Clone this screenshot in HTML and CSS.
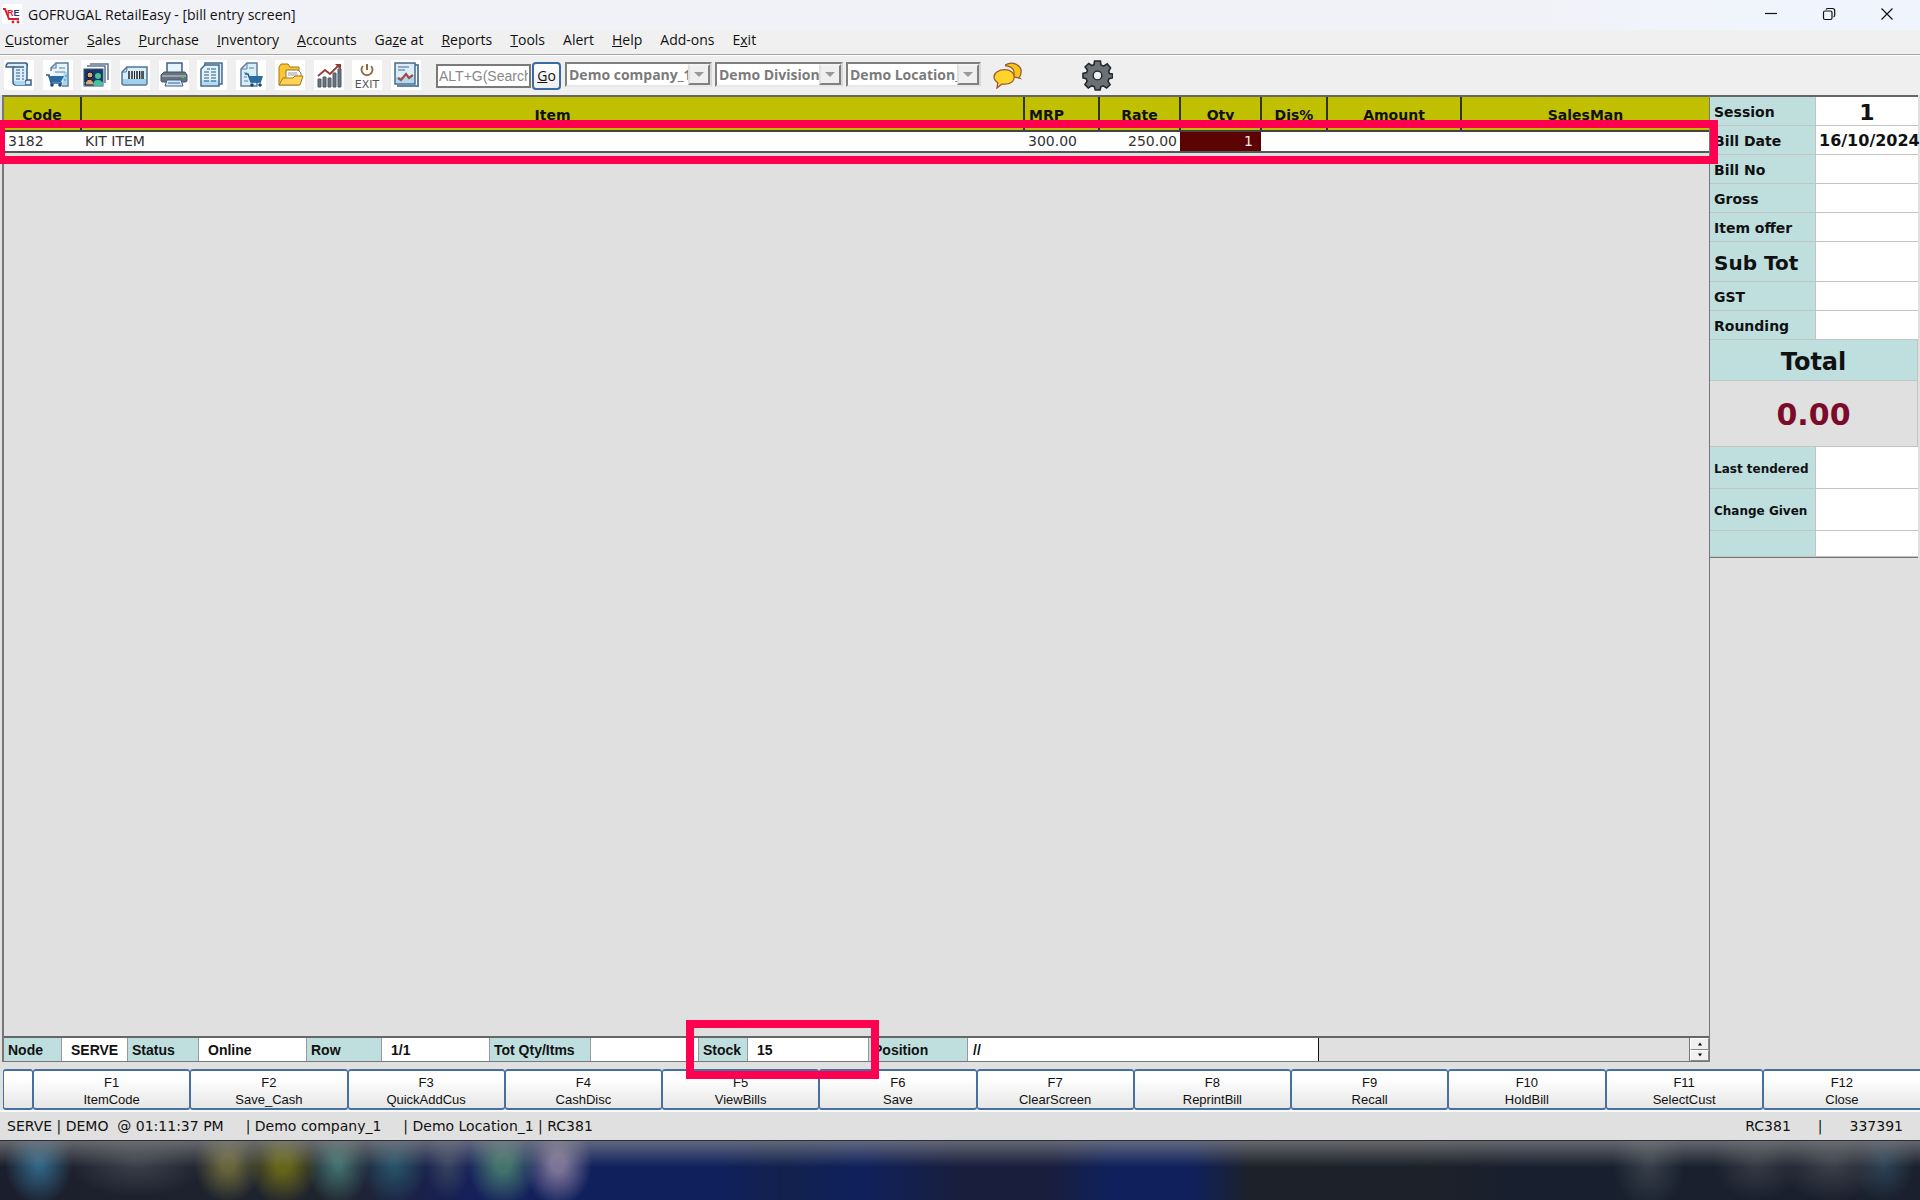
FILE: index.html
```html
<!DOCTYPE html>
<html lang="en">
<head>
    <meta charset="UTF-8">
    <meta name="viewport" content="width=device-width, initial-scale=1.0">
    <title>GOFRUGAL RetailEasy - [bill entry screen]</title>
    <link rel="stylesheet" href="styles.css">
</head>
<body>
    <header class="titlebar">
        <svg class="app-icon" viewBox="0 0 20 20" aria-hidden="true">
            <rect width="20" height="20" fill="#fff"/>
            <path d="M1 5h2l4 10h10" fill="none" stroke="#d8202c" stroke-width="2"/>
            <text x="5" y="12" class="app-icon-text"><tspan fill="#d8202c">R</tspan><tspan fill="#25367c">E</tspan></text>
            <circle cx="11" cy="18" r="1.4" fill="#d8202c"/>
            <circle cx="16" cy="18" r="1.4" fill="#d8202c"/>
        </svg>
        <h1>GOFRUGAL RetailEasy - [bill entry screen]</h1>
        <div class="window-buttons">
            <button type="button" aria-label="Minimize"><svg viewBox="0 0 14 14"><path d="M1 6.500h12"/></svg></button>
            <button type="button" aria-label="Restore"><svg viewBox="0 0 14 14"><rect x="1.500" y="4" width="8.500" height="8.500" rx="1.500"/><path d="M4 2.500Q4.500 1.500 6 1.500h4.500q2.200 0 2.200 2.200V8q0 1.500-1.200 2"/></svg></button>
            <button type="button" aria-label="Close"><svg viewBox="0 0 14 14"><path d="M1.500 1.500l11 11M12.500 1.500l-11 11"/></svg></button>
        </div>
    </header>

    <nav class="menubar">
        <button type="button"><u>C</u>ustomer</button>
        <button type="button"><u>S</u>ales</button>
        <button type="button"><u>P</u>urchase</button>
        <button type="button"><u>I</u>nventory</button>
        <button type="button"><u>A</u>ccounts</button>
        <button type="button">Ga<u>z</u>e at</button>
        <button type="button"><u>R</u>eports</button>
        <button type="button"><u>T</u>ools</button>
        <button type="button">Alert</button>
        <button type="button"><u>H</u>elp</button>
        <button type="button">Add-ons</button>
        <button type="button">E<u>x</u>it</button>
    </nav>

    <div class="toolbar">
        <div class="tools">
            <button type="button" aria-label="Bill"><svg viewBox="0 0 30 30">
                <path d="M4 3h18q2 1 1 4v13h4v5H12q-3 0-3-3V7H2q0-3 2-4z" fill="#d9eefa" stroke="#3d5f86" stroke-width="1.500"/>
                <path d="M9 7h11M23 20q-2 0-2 5" fill="none" stroke="#3d5f86" stroke-width="1.300"/>
                <path d="M10 21h11v4h-9q-2-1-2-4z" fill="#a9d8f0"/>
                <path d="M12 10h4M12 13h4M12 16h4M12 19h4M18 10h2M18 13h2M18 16h2M18 19h2" stroke="#33587e" stroke-width="1.200"/>
            </svg></button>
            <button type="button" aria-label="Sales"><svg viewBox="0 0 30 30">
                <path d="M8 11V8l5-5h12v23h-6" fill="#e6f4fc" stroke="#5f7ea0" stroke-width="1.500"/>
                <path d="M21 12h3v13h-5z" fill="#a9d8f0"/>
                <path d="M13 3v5H8M16 8h6M12 12h10M22 16h2M21 20h2" fill="none" stroke="#5f7ea0" stroke-width="1.200"/>
                <path d="M3 15h3l2 8h11" fill="none" stroke="#205b8e" stroke-width="1.500"/>
                <path d="M5 16h16l-3 6H8z" fill="#2a6ba3"/>
                <circle cx="9" cy="25" r="1.800" fill="#174a76"/><circle cx="17" cy="25" r="1.800" fill="#174a76"/>
            </svg></button>
            <button type="button" aria-label="Customers"><svg viewBox="0 0 30 30">
                <path d="M9 4h18v16M6 6h18v17" fill="none" stroke="#5b7594" stroke-width="1.500"/>
                <rect x="3" y="9" width="19" height="17" fill="#16386c" stroke="#345777"/>
                <path d="M3 22h19v4H3z" fill="#5aa0d0"/>
                <circle cx="9" cy="15" r="3" fill="#d9a781" stroke="#111"/><path d="M4 25q0-5 5-6 4 1 4 6z" fill="#d9a781" stroke="#111"/>
                <circle cx="17" cy="16" r="3" fill="#44c490"/><path d="M12 25q0-5 5-5t4 5z" fill="#44c490"/>
            </svg></button>
            <button type="button" aria-label="Barcode"><svg viewBox="0 0 30 30">
                <path d="M7 7h20v16q0 2-2 2H4q-2 0-2-2V12z" fill="#d7edf9" stroke="#4f7498" stroke-width="1.500"/>
                <path d="M2 12h4q1-1 1-5" fill="none" stroke="#4f7498"/>
                <path d="M3 19h23v5H3z" fill="#9fd0ec"/>
                <path d="M9 11v8M12 11v8M17 11v8M23 11v8" stroke="#222" stroke-width="1.500"/><path d="M14.500 11v8M19.500 11v8M21.200 11v8" stroke="#222"/>
            </svg></button>
            <button type="button" aria-label="Print"><svg viewBox="0 0 30 30">
                <path d="M8 3h15v11H8z" fill="#e6f4fd" stroke="#3d5f86" stroke-width="1.500"/>
                <path d="M5 12h21l2 3v6q0 1-2 1H4q-2 0-2-1v-6z" fill="#68717c" stroke="#46525f"/><path d="M3 15h24v2H3z" fill="#9aa3ac"/>
                <circle cx="24" cy="17" r="1.300" fill="#35d070"/>
                <path d="M8 20h14l2 6H6z" fill="#d2eafa" stroke="#3d5f86"/><path d="M9 23h12" stroke="#3d5f86"/>
            </svg></button>
            <button type="button" aria-label="Reports"><svg viewBox="0 0 30 30">
                <path d="M8 3h17v21H8z" fill="#d9eefa" stroke="#44698c" stroke-width="1.500"/>
                <path d="M8 5h14v21H4V9z" fill="#e2f3fd" stroke="#44698c" stroke-width="1.500"/>
                <path d="M5 20h16v5H5z" fill="#b5dcf2"/>
                <path d="M10 9h3M7 12h5M7 15h5M7 18h5M7 21h5M14 9h5M14 12h5M14 15h5M14 18h5M14 21h5" stroke="#285b84"/>
            </svg></button>
            <button type="button" aria-label="Purchase order"><svg viewBox="0 0 30 30">
                <path d="M5 9l6-6h10v23H5z" fill="#d9eefa" stroke="#5f7ea0" stroke-width="1.500"/>
                <path d="M5 9h6V3M13 8h5M8 13h3M8 17h3M8 21h4" fill="none" stroke="#5f7ea0"/>
                <path d="M9 14h3l3 8h10" fill="none" stroke="#205b8e" stroke-width="1.500"/>
                <path d="M12 16h15l-2 6H15z" fill="#2a6ba3"/>
                <circle cx="16" cy="25" r="1.800" fill="#174a76"/><circle cx="24" cy="25" r="1.800" fill="#174a76"/>
            </svg></button>
            <button type="button" aria-label="Open"><svg viewBox="0 0 30 30">
                <path d="M4 25V7l2-3h7l2 3h9v18z" fill="#fcc62f" stroke="#a9741c"/>
                <path d="M11 10h12l3 3v6H11z" fill="#fff" stroke="#82754f"/><path d="M13 13h9M13 15h10" stroke="#999"/>
                <path d="M4 25l4-7h10l2-2h8l-3 9z" fill="#ffd557" stroke="#a9741c"/>
            </svg></button>
            <button type="button" aria-label="Analysis"><svg viewBox="0 0 30 30">
                <path d="M4 27v-8h3v8zM9 27V17h3v10zM14 27V18h3v9zM19 27V13h3v14zM24 27V9h3v18z" fill="#68747e" stroke="#4c5963"/>
                <path d="M4 16l7-6 5 4 9-9" fill="none" stroke="#8d4134" stroke-width="1.800"/><path d="M21 4h6v6z" fill="#8d4134"/>
            </svg></button>
            <button type="button" aria-label="Exit"><svg viewBox="0 0 30 30">
                <path d="M11 6a5.500 5.500 0 1 0 8 0" fill="none" stroke="#96663a" stroke-width="1.800"/><path d="M15 4v6" stroke="#96663a" stroke-width="2"/>
                <text x="15" y="28" class="exit-text">EXIT</text>
            </svg></button>
            <button type="button" aria-label="Dashboard"><svg viewBox="0 0 30 30">
                <path d="M6 26h21V5h-3" fill="none" stroke="#5f86a8" stroke-width="2"/>
                <rect x="4" y="3" width="20" height="21" fill="#d9eefa" stroke="#44698c" stroke-width="1.500"/>
                <path d="M5 17h18v6H5z" fill="#b0d8ef"/><path d="M7 7h11M7 10h7" stroke="#44698c"/>
                <path d="M7 18l3 2 5-6 3 4 4-3" fill="none" stroke="#a24c43" stroke-width="2.200"/>
            </svg></button>
        </div>
        <div class="finder">
            <input type="text" class="search" aria-label="Search menu" placeholder="ALT+G(Search)">
            <button type="button" class="go"><u>G</u>o</button>
        </div>
        <div class="combos">
            <div class="combo company"><select aria-label="Company" disabled><option>Demo company_1</option></select><span class="arrow"></span></div>
            <div class="combo division"><select aria-label="Division" disabled><option>Demo Division_1</option></select><span class="arrow"></span></div>
            <div class="combo location"><select aria-label="Location" disabled><option>Demo Location_1</option></select><span class="arrow"></span></div>
        </div>
        <button type="button" class="plain chat" aria-label="Messages"><svg viewBox="0 0 32 28">
            <path d="M13 3q5-3 10-1 7 3 6 9 0 3-2 5l1 1-8-2q3-3 1-7-3-4-8-4z" fill="#f8c516" stroke="#9a5935" stroke-width="1.300"/>
            <path d="M12 8c6 0 10 3 10 7.500S18 23 12 23l-3 0-5 4 1-5.500Q1 19 1 15.500C1 11 6 8 12 8z" fill="#ffd429" stroke="#9a5935" stroke-width="1.300"/>
        </svg></button>
        <button type="button" class="plain" aria-label="Settings"><svg viewBox="0 0 32 32">
            <path d="M13 1h6l.6 4.200 2.800 1.200L26 4l3.500 4-2 3.700.9 2.300 3.100.5v4l-3.600.8-1.100 2.600L29 25.500 25.500 29l-3.600-2.300-2.500 1L18.700 31h-5l-.9-3.400-2.700-1.100L6.500 29 3 25.400l2.300-3.600-1-2.500L1 18.500v-4.700l3.700-.8 1-2.400L3.200 7 7 3.500l3.300 2.200 2-.8z" fill="#6b7075" stroke="#22272c" stroke-width="1.600"/>
            <circle cx="16" cy="16" r="4.500" fill="#efefef" stroke="#22272c" stroke-width="1.500"/>
        </svg></button>
    </div>

    <main class="workspace">
        <section class="bill">
            <div class="items">
                <table>
                    <thead>
                        <tr>
                            <th class="code">Code</th>
                            <th>Item</th>
                            <th class="mrp">MRP</th>
                            <th class="rate">Rate</th>
                            <th class="qty">Qty</th>
                            <th class="dis">Dis%</th>
                            <th class="amount">Amount</th>
                            <th class="salesman">SalesMan</th>
                        </tr>
                    </thead>
                    <tbody>
                        <tr>
                            <td>3182</td>
                            <td>KIT ITEM</td>
                            <td>300.00</td>
                            <td class="num">250.00</td>
                            <td class="num active">1</td>
                            <td></td>
                            <td></td>
                            <td></td>
                        </tr>
                    </tbody>
                </table>
                <div class="mark mark-row"></div>
            </div>
            <div class="info">
                <span class="label node">Node</span><span class="value serve">SERVE</span>
                <span class="label status">Status</span><span class="value wide">Online</span>
                <span class="label row">Row</span><span class="value wide">1/1</span>
                <span class="label tot">Tot Qty/Itms</span><span class="value wide"></span>
                <div class="stock">
                    <span class="label">Stock</span><span class="value">15</span>
                    <div class="mark mark-stock"></div>
                </div>
                <span class="label position">Position</span><span class="value path">//</span>
                <span class="filler"></span>
                <div class="spinner">
                    <button type="button" aria-label="Up"><svg viewBox="0 0 6 4"><path d="M1 3.500L3 .5l2 3z"/></svg></button>
                    <button type="button" aria-label="Down"><svg viewBox="0 0 6 4"><path d="M1 .5l2 3 2-3z"/></svg></button>
                </div>
            </div>
        </section>

        <aside class="summary">
            <table>
                <tbody>
                    <tr><th>Session</th><td class="session">1</td></tr>
                    <tr><th>Bill Date</th><td>16/10/2024</td></tr>
                    <tr><th>Bill No</th><td></td></tr>
                    <tr><th>Gross</th><td></td></tr>
                    <tr><th>Item offer</th><td></td></tr>
                    <tr class="subtotal"><th>Sub Tot</th><td></td></tr>
                    <tr><th>GST</th><td></td></tr>
                    <tr><th>Rounding</th><td></td></tr>
                    <tr class="total"><th colspan="2">Total</th></tr>
                    <tr class="total-value"><td colspan="2">0.00</td></tr>
                    <tr class="tender"><th>Last tendered</th><td></td></tr>
                    <tr class="tender"><th>Change Given</th><td></td></tr>
                    <tr class="last"><th></th><td></td></tr>
                </tbody>
            </table>
        </aside>
    </main>

    <div class="fkeys">
        <button type="button" aria-label="More"></button>
        <button type="button">F1<br>ItemCode</button>
        <button type="button">F2<br>Save_Cash</button>
        <button type="button">F3<br>QuickAddCus</button>
        <button type="button">F4<br>CashDisc</button>
        <button type="button">F5<br>ViewBills</button>
        <button type="button">F6<br>Save</button>
        <button type="button">F7<br>ClearScreen</button>
        <button type="button">F8<br>ReprintBill</button>
        <button type="button">F9<br>Recall</button>
        <button type="button">F10<br>HoldBill</button>
        <button type="button">F11<br>SelectCust</button>
        <button type="button">F12<br>Close</button>
    </div>

    <footer class="statusbar">
        <span>SERVE | DEMO&nbsp; @ 01:11:37 PM</span>
        <span>| Demo company_1</span>
        <span>| Demo Location_1 | RC381</span>
        <span class="serial">RC381</span>
        <span>|</span>
        <span>337391</span>
    </footer>

    <div class="taskbar"></div>
</body>
</html>
```
FILE: styles.css
```css
* {
    box-sizing: border-box;
}
body {
    margin: 0;
    min-height: 100vh;
    display: flex;
    flex-direction: column;
    background: #e0e0e0;
    color: #111;
    font-family: "DejaVu Sans", Verdana, sans-serif;
    font-size: 14px;
    overflow: hidden;
}
button {
    margin: 0;
    padding: 0;
    border: none;
    background: none;
    color: inherit;
    font: inherit;
}
svg {
    display: block;
}

/* title bar and menu */
.titlebar {
    display: flex;
    align-items: center;
    height: 30px;
    padding: 0 4px 2px 2px;
    background: linear-gradient(90deg, #f1f2f8 80%, #f0f5fd 95%);
    font-family: "Open Sans", "Segoe UI", sans-serif;
}
.titlebar h1 {
    margin: 0 0 0 6px;
    font-size: 14px;
    font-weight: 400;
}
.app-icon {
    width: 20px;
    height: 20px;
}
.app-icon-text {
    font: bold 9px "Liberation Sans", sans-serif;
}
.window-buttons {
    display: flex;
    margin-left: auto;
}
.window-buttons button {
    width: 58px;
    height: 28px;
    display: flex;
    align-items: center;
    justify-content: center;
}
.window-buttons svg {
    width: 14px;
    height: 14px;
    fill: none;
    stroke: #111;
    stroke-width: 1.2;
}
.menubar {
    display: flex;
    gap: 18px;
    height: 25px;
    padding: 0 5px;
    background: #f0f0f0;
    border-bottom: 1px solid #a5a5a5;
    font-family: "Open Sans", "Segoe UI", sans-serif;
    font-size: 14px;
}
.menubar button {
    height: 20px;
    line-height: 20px;
}

/* toolbar */
.toolbar {
    display: flex;
    height: 40px;
    padding: 4px 4px;
    background: #efefef;
    border-top: 1px solid #fff;
}
.tools {
    display: flex;
    justify-content: space-between;
    width: 417px;
}
.tools button {
    height: 30px;
    background: #fff;
}
.tools svg {
    width: 30px;
    height: 30px;
}
.exit-text {
    font: 11px "DejaVu Sans", sans-serif;
    text-anchor: middle;
    fill: #555;
}
.finder {
    display: flex;
    align-items: center;
    margin-left: 15px;
    gap: 1px;
}
.search {
    width: 95px;
    height: 24px;
    padding: 0 1px;
    border: 2px solid #7a7a7a;
    background: #fff;
    font: 14px "Liberation Sans", Arial, sans-serif;
}
.search::placeholder {
    color: #888;
}
.go {
    width: 29px;
    height: 28px;
    border: 2px solid #3b6ba0;
    border-radius: 4px;
    background: linear-gradient(#fff, #eee);
    font: 14px "Open Sans", "Segoe UI", sans-serif;
}
.combos {
    display: flex;
    gap: 3px;
    margin-left: 4px;
}
.combo {
    display: flex;
    height: 25px;
    margin-top: 2px;
    background: #fff;
    border: 2px solid;
    border-color: #808080 #d8d8d8 #e8e8e8 #808080;
}
.combo select {
    flex: 1;
    min-width: 0;
    padding: 0 0 0 2px;
    border: none;
    appearance: none;
    background: #fff;
    color: #7b7b7b;
    opacity: 1;
    font: bold 14px "Open Sans", Tahoma, sans-serif;
}
.company {
    width: 147px;
}
.division {
    width: 128px;
}
.location {
    width: 135px;
}
.arrow {
    display: flex;
    align-items: center;
    justify-content: center;
    width: 22px;
    background: #efefef;
    border: 2px solid;
    border-color: #f4f4f4 #808080 #808080 #e0e0e0;
}
.arrow::before {
    content: "";
    border: 5px solid transparent;
    border-top-color: #999;
    border-bottom: none;
}
.plain svg {
    width: 31px;
    height: 31px;
}
.chat {
    margin: 0 58px 0 12px;
}
.chat svg {
    height: 27px;
}

/* bill entry grid */
.workspace {
    flex: 1;
    display: flex;
    padding: 0 2px 7px;
}
.bill {
    flex: 1;
    display: flex;
    flex-direction: column;
    border-top: 2px solid #666;
    border-left: 2px solid #777;
    border-right: 1px solid #777;
}
.items {
    position: relative;
    flex: 1;
}
.items table {
    width: 100%;
    table-layout: fixed;
    border-collapse: collapse;
}
.items th {
    height: 34px;
    padding: 3px 3px 0;
    background: #c0c000;
    border-right: 2px solid #33330a;
    border-bottom: 2px solid #444;
    font-size: 14px;
}
.items th:last-child {
    border-right: none;
}
.items td {
    height: 21px;
    padding: 0 4px 1px;
    background: #fff;
    border-bottom: 2px solid #555;
    color: #333;
}
.items .code {
    width: 77px;
}
.items .mrp {
    width: 75px;
    text-align: left;
    padding-left: 4px;
}
.items .rate,
.items .qty {
    width: 81px;
}
.items .dis {
    width: 66px;
}
.items .amount {
    width: 134px;
}
.items .salesman {
    width: 248px;
}
.items .num {
    text-align: right;
    padding-right: 3px;
}
.items .active {
    padding-right: 8px;
    background: #5c0404;
    color: #eee;
}

/* highlight frames */
.mark {
    position: absolute;
    border: 8px solid #ff0050;
    pointer-events: none;
}
.mark-row {
    top: 23px;
    left: -7px;
    right: -9px;
    height: 44px;
}
.mark-stock {
    top: -18px;
    right: -10px;
    bottom: -18px;
    left: -13px;
}

/* info strip */
.info {
    display: flex;
    height: 26px;
    border-top: 2px solid #666;
    border-bottom: 1px solid #777;
    font-family: "Liberation Sans", Arial, sans-serif;
    font-size: 14px;
    font-weight: 700;
    line-height: 25px;
}
.label,
.value {
    height: 23px;
    padding-left: 4px;
    border-right: 1px solid #999;
    white-space: nowrap;
}
.label {
    background: #bfdfdf;
}
.value {
    padding-left: 9px;
    background: #fff;
}
.node {
    width: 58px;
}
.serve {
    width: 66px;
}
.status {
    width: 71px;
}
.row {
    width: 75px;
}
.tot {
    width: 101px;
}
.wide {
    width: 108px;
}
.stock {
    position: relative;
    display: flex;
    width: 170px;
}
.stock .label {
    width: 49px;
}
.stock .value {
    flex: 1;
}
.position {
    width: 99px;
}
.path {
    width: 351px;
    padding-left: 5px;
    border-right: 1px solid #111;
}
.filler {
    flex: 1;
    border-right: 1px solid #777;
}
.spinner {
    display: flex;
    flex-direction: column;
    width: 19px;
}
.spinner button {
    flex: 1;
    display: flex;
    align-items: center;
    justify-content: center;
    background: #f0f0f0;
    border: 1px solid;
    border-color: #fff #888 #888 #fff;
}
.spinner svg {
    width: 6px;
    height: 4px;
}

/* totals panel */
.summary {
    width: 208px;
    border-top: 2px solid #666;
}
.summary table {
    width: 100%;
    table-layout: fixed;
    border-collapse: separate;
    border-spacing: 0;
    border-bottom: 1px solid #777;
    font-weight: 700;
}
.summary th,
.summary td {
    height: 29px;
    padding: 2px 0 0 4px;
    border-right: 1px solid #c4c4c4;
    border-bottom: 1px solid #c4c4c4;
    text-align: left;
    white-space: nowrap;
}
.summary th {
    width: 106px;
    background: #bfdfdf;
}
.summary td {
    padding-left: 3px;
    background: #fff;
    border-right: none;
    font-size: 16px;
    line-height: 18px;
}
.summary .session {
    padding: 4px 0 0;
    font-size: 22px;
    line-height: 22px;
    text-align: center;
}
.summary .subtotal th {
    height: 40px;
    font-size: 20px;
}
.summary .total th {
    height: 41px;
    padding: 3px 0 0;
    font-size: 24px;
    text-align: center;
}
.summary .total-value td {
    height: 66px;
    padding: 3px 0 0;
    background: #e0e0e0;
    border-right: 1px solid #c4c4c4;
    color: #7a0c2a;
    font-size: 30px;
    text-align: center;
}
.summary .tender th {
    height: 42px;
    font-size: 12px;
}
.summary .last th,
.summary .last td {
    height: 26px;
}

/* function keys */
.fkeys {
    display: grid;
    grid-template-columns: 30px repeat(12, 1fr);
    height: 43px;
    padding-left: 3px;
    border-bottom: 2px solid #fafafa;
}
.fkeys button {
    padding-top: 2px;
    border: 2px solid #44719f;
    border-width: 2px 1px;
    border-radius: 3px;
    background: linear-gradient(#fff 20%, #e6e6e6);
    font: 13px/17px "Liberation Sans", Arial, sans-serif;
}
.fkeys button:last-child {
    border-right: none;
    border-radius: 3px 0 0 3px;
}

.statusbar {
    display: flex;
    align-items: center;
    height: 28px;
    padding: 0 17px 1px 7px;
    gap: 22px;
}
.serial {
    margin-left: auto;
}
.statusbar .serial ~ span {
    margin-left: 5px;
}

/* frosted taskbar */
.taskbar {
    height: 60px;
    border-top: 1px solid #2b2d36;
    background:
        linear-gradient(rgba(150, 150, 150, 0.6), rgba(110, 110, 110, 0) 26px),
        radial-gradient(ellipse 34px 42px at 39px 22px, #316585 10%, transparent),
        radial-gradient(ellipse 70px 34px at 137px 22px, #3a3e49 10%, transparent),
        radial-gradient(ellipse 34px 40px at 228px 22px, #66643a 20%, transparent),
        radial-gradient(ellipse 36px 42px at 283px 22px, #66651a 20%, transparent),
        radial-gradient(ellipse 32px 42px at 338px 22px, #41706f 10%, transparent),
        radial-gradient(ellipse 34px 42px at 394px 22px, #285267 10%, transparent),
        radial-gradient(ellipse 24px 36px at 448px 22px, #36415f 10%, transparent),
        radial-gradient(ellipse 36px 44px at 503px 22px, #43736d 20%, transparent),
        radial-gradient(ellipse 34px 44px at 558px 22px, #7c7397 20%, transparent),
        radial-gradient(ellipse 36px 48px at 1649px 22px, #363e49 10%, transparent),
        radial-gradient(ellipse 44px 38px at 1757px 22px, #343943 10%, transparent),
        radial-gradient(ellipse 54px 38px at 1832px 22px, #3a3e48 10%, transparent),
        radial-gradient(ellipse 32px 38px at 1883px 22px, #2c4254 10%, transparent),
        linear-gradient(90deg, #1b1f2d 0, #20242e 340px, #16205a 470px, #0f205c 600px, #0f205c 720px, #12214c 780px, #0f205c 860px, #181e3c 960px, #181e3c 1050px, #0f205c 1110px, #0f205c 1190px, #1c212a 1250px, #1d2129 1420px, #181f2e 1520px, #1a202d 100%);
}
```
